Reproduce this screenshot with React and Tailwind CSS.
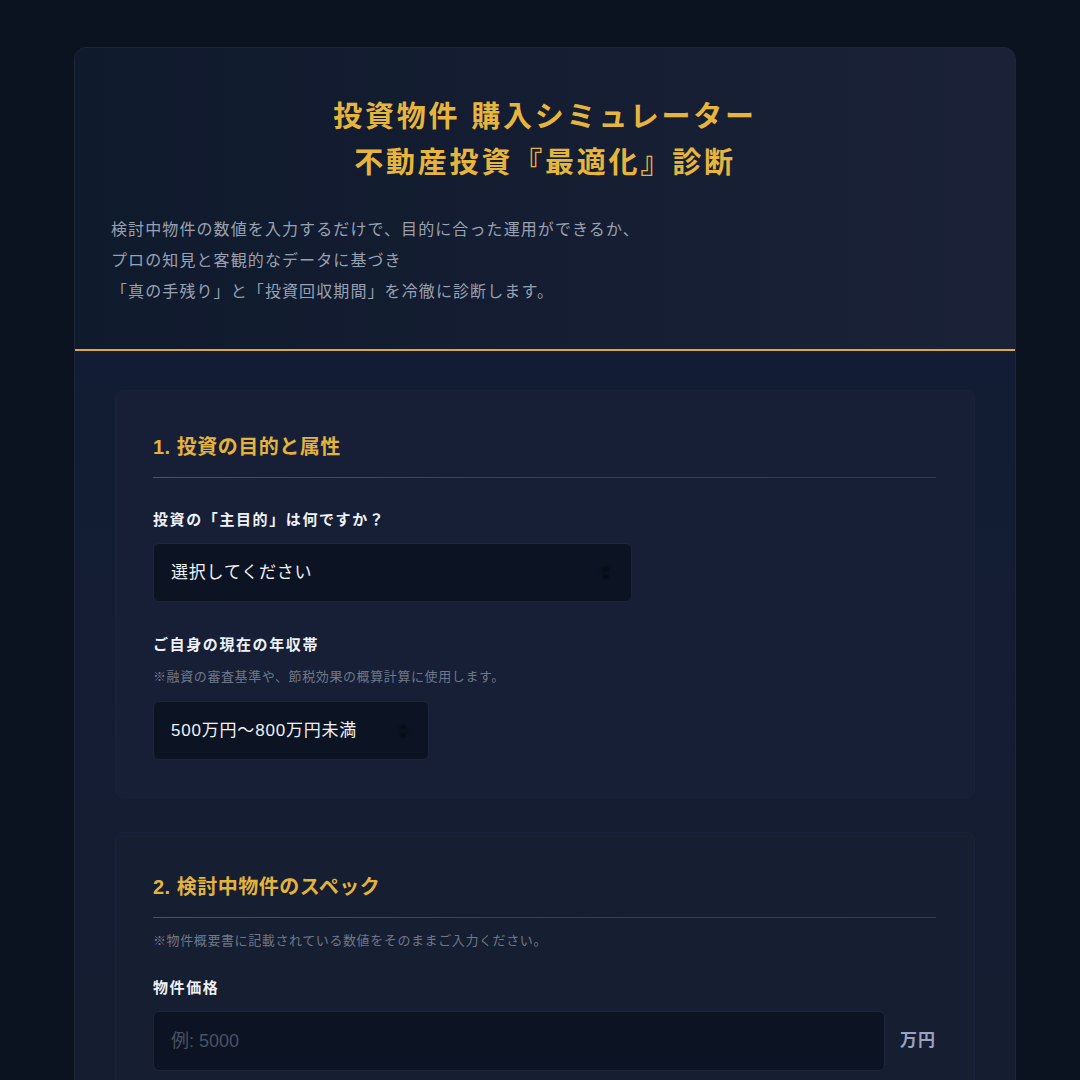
const font = {
  fontFamily: '"Liberation Sans", "Noto Sans CJK JP", sans-serif',
};

function Chevron({ className }) {
  return (
    <svg
      className={className}
      width="10"
      height="16"
      viewBox="0 0 10 16"
      fill="none"
      stroke="currentColor"
      strokeWidth="2.5"
    >
      <path d="M2 6l3-3 3 3M2 10l3 3 3-3" />
    </svg>
  );
}

function Select({ value, width }) {
  return (
    <div
      className={`relative flex items-center h-[59px] rounded-md border border-[#1d2638] bg-[#0c1424] pl-[17px] ${width}`}
    >
      <span className="text-[17px] tracking-[0.8px] text-[#eef1f6]">{value}</span>
      <Chevron className="absolute right-[20px] top-1/2 -translate-y-1/2 text-[#050810] blur-[1.5px]" />
    </div>
  );
}

function SectionTitle({ children }) {
  return (
    <>
      <h2 className="text-[20px] leading-[28px] font-bold tracking-[0.5px] text-[#e3b33e]">
        {children}
      </h2>
      <div className="mt-[16px] h-px bg-gradient-to-r from-[#5e5236] via-[#3a3f4a] to-[#343c4d]" />
    </>
  );
}

function Label({ children }) {
  return (
    <div className="text-[15px] leading-[22px] font-bold tracking-[1.6px] text-[#eef1f7]">
      {children}
    </div>
  );
}

function Hint({ children }) {
  return (
    <div className="text-[13px] leading-[18px] tracking-[0.6px] text-[#6f7888]">
      {children}
    </div>
  );
}

export default function App() {
  return (
    <div
      className="min-h-[1080px] bg-[#0b1220] pt-[47px] pl-[74px] overflow-hidden"
      style={font}
    >
      <div className="w-[942px] rounded-t-xl border border-[#1d2537] bg-[#141c2f] overflow-hidden">
        {/* Header */}
        <div className="bg-gradient-to-r from-[#101a2d] via-[#141d31] to-[#1b2238] px-[36px] pt-[46px] pb-[42px]">
          <h1 className="text-center text-[29px] leading-[46px] font-bold text-[#e6b53d] tracking-[2.8px]">
            投資物件 購入シミュレーター
            <br />
            不動産投資『最適化』診断
          </h1>
          <p className="mt-[28px] text-[16px] leading-[31px] tracking-[1.1px] text-[#98a1b2]">
            検討中物件の数値を入力するだけで、目的に合った運用ができるか、
            <br />
            プロの知見と客観的なデータに基づき
            <br />
            「真の手残り」と「投資回収期間」を冷徹に診断します。
          </p>
        </div>
        <div className="h-[2px] bg-[#d9aa3c]" />

        {/* Body */}
        <div className="bg-gradient-to-b from-[#121c34] to-[#151d30] pl-[40px] pr-[40px] pt-[39px] pb-[40px] flex flex-col gap-[34px]">
          <section className="rounded-lg border border-[#19223a] bg-[#161f35] pl-[37px] pr-[38px] pt-[42px] pb-[37px]">
            <SectionTitle>1. 投資の目的と属性</SectionTitle>
            <div className="mt-[31px]">
              <Label>投資の「主目的」は何ですか？</Label>
              <div className="mt-[12px]">
                <Select value="選択してください" width="w-[479px]" />
              </div>
            </div>
            <div className="mt-[32px]">
              <Label>ご自身の現在の年収帯</Label>
              <div className="mt-[12px]">
                <Hint>※融資の審査基準や、節税効果の概算計算に使用します。</Hint>
              </div>
              <div className="mt-[15px]">
                <Select value="500万円〜800万円未満" width="w-[276px]" />
              </div>
            </div>
          </section>

          <section className="rounded-lg border border-[#19223a] bg-[#161e31] pl-[37px] pr-[38px] pt-[40px] pb-[37px]">
            <SectionTitle>2. 検討中物件のスペック</SectionTitle>
            <div className="mt-[14px]">
              <Hint>※物件概要書に記載されている数値をそのままご入力ください。</Hint>
            </div>
            <div className="mt-[27px]">
              <Label>物件価格</Label>
              <div className="mt-[12px] flex items-center gap-[15px]">
                <div className="flex-1 flex items-center h-[60px] rounded-md border border-[#1d2638] bg-[#0c1424] pl-[17px]">
                  <span className="text-[18px] text-[#4a5263]">例: 5000</span>
                </div>
                <span className="text-[17px] font-bold tracking-[1px] text-[#9ba2c0]">万円</span>
              </div>
            </div>
          </section>
        </div>
      </div>
    </div>
  );
}
